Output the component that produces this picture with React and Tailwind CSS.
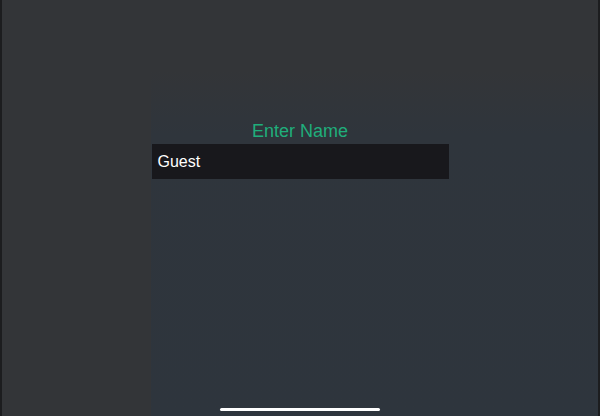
export default function App() {
  return (
    <div
      className="w-[600px] h-[416px] flex bg-[#333538] overflow-hidden"
      style={{ fontFamily: '"Liberation Sans", Arial, sans-serif' }}
    >
      <div className="w-[2px] bg-[#1c1d1f]" />
      <div className="relative flex-1">
        {/* bluish panel behind the form, fading in from the top */}
        <div className="absolute left-[149px] right-0 top-[70px] bottom-0 bg-gradient-to-b from-[#333538] via-[#2f353c] via-[65px] to-[#2e353d]" />
        <div className="relative flex flex-col items-center pt-[119px]">
          <p className="text-[18px] leading-[24px] text-[#1fae7b]">Enter Name</p>
          <div className="mt-[1px] w-[297px] h-[35px] bg-[#18181c] flex items-center pl-[6px]">
            <span className="text-[16px] text-white">Guest</span>
          </div>
        </div>
        <div className="absolute left-[218px] bottom-[5px] w-[160px] h-[3px] rounded-full bg-white" />
      </div>
      <div className="w-[2px] bg-[#1c1d1f]" />
    </div>
  );
}
